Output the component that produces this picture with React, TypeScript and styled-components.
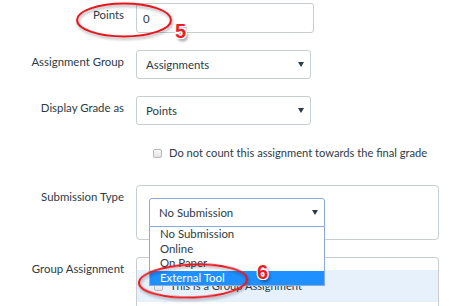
import { createGlobalStyle, styled } from "styled-components"

const GlobalStyle = createGlobalStyle`
  body {
    margin: 0;
    background: #fff;
    font-family: Lato, "Open Sans", sans-serif;
    color: #2d3b45;
  }
`

const Form = styled.div`
  position: relative;
  width: 469px;
  height: 306px;
  overflow: hidden;
  padding-top: 3px;
  box-sizing: border-box;
`

const Row = styled.div<{ $gap: number }>`
  display: grid;
  grid-template-columns: 124px 1fr;
  column-gap: 12px;
  margin-bottom: ${p => p.$gap}px;
`

const Label = styled.div`
  text-align: right;
  font-size: 11.4px;
  line-height: 14px;
  padding-top: 5px;
`

const TextInput = styled.div`
  width: 178px;
  height: 30px;
  box-sizing: border-box;
  border: 1px solid #c7cdd1;
  border-radius: 3px;
  padding: 0 6px;
  display: flex;
  align-items: center;
  font-size: 11.4px;
`

const Select = styled.div<{ $w: number; $focus?: boolean }>`
  position: relative;
  width: ${p => p.$w}px;
  height: 29px;
  box-sizing: border-box;
  border: 1px solid ${p => (p.$focus ? "#8aa9dc" : "#c7cdd1")};
  border-radius: ${p => (p.$focus ? "3px 3px 0 0" : "3px")};
  padding: 0 9px;
  display: flex;
  align-items: center;
  justify-content: space-between;
  font-size: 11.4px;
  background: #fff;
`

const Arrow = styled.span`
  width: 0;
  height: 0;
  border-left: 3px solid transparent;
  border-right: 3px solid transparent;
  border-top: 5px solid #2d3b45;
  margin-right: -3px;
`

const CheckRow = styled.label`
  display: flex;
  align-items: center;
  gap: 7px;
  padding-left: 17px;
  font-size: 11.15px;
  line-height: 16px;
`

const Box = styled.span`
  width: 9px;
  height: 9px;
  box-sizing: border-box;
  border: 1px solid #b5b9bd;
  border-radius: 2px;
  background: linear-gradient(#fafafa, #e3e3e3);
`

const Panel = styled.div<{ $open?: boolean }>`
  position: relative;
  width: 303px;
  box-sizing: border-box;
  border: 1px solid #c7cdd1;
  border-radius: ${p => (p.$open ? "4px 4px 0 0" : "4px")};
  padding: ${p => (p.$open ? "12px 0 0" : "12px")};
  ${p => (p.$open ? "border-bottom: none; height: 60px;" : "")}
`

const Band = styled.div`
  background: #e6f1fc;
  height: 32px;
  display: flex;
  align-items: flex-end;
  padding-bottom: 8px;
  box-sizing: border-box;
`

const List = styled.div`
  position: absolute;
  left: 12px;
  top: 41px;
  width: 176px;
  box-sizing: border-box;
  border: 1px solid #8aa9dc;
  border-top: none;
  background: #fff;
  z-index: 2;
`

const Option = styled.div<{ $active?: boolean }>`
  height: 14.5px;
  line-height: 14px;
  padding-left: 10px;
  font-size: 11.4px;
  color: ${p => (p.$active ? "#fff" : "#2d3b45")};
  background: ${p => (p.$active ? "#1e90ff" : "transparent")};
`

const Mark = styled.svg`
  position: absolute;
  left: 0;
  top: 0;
  pointer-events: none;
  z-index: 3;
`

const Step = styled.span<{ $x: number; $y: number }>`
  position: absolute;
  left: ${p => p.$x}px;
  top: ${p => p.$y}px;
  font-family: "Liberation Sans", Arial, sans-serif;
  font-weight: bold;
  font-size: 20px;
  line-height: 20px;
  color: #ee1c24;
  text-shadow:
    1px 0 0 #fff, -1px 0 0 #fff, 0 1px 0 #fff, 0 -1px 0 #fff,
    1px 1px 0 #fff, -1px -1px 0 #fff, 1px -1px 0 #fff, -1px 1px 0 #fff,
    2px 3px 3px rgba(0, 0, 0, 0.45);
  z-index: 4;
`

export default function App() {
  return (
    <Form>
      <GlobalStyle />
      <Row $gap={17}>
        <Label>Points</Label>
        <TextInput>0</TextInput>
      </Row>
      <Row $gap={17}>
        <Label>Assignment Group</Label>
        <Select $w={175}>Assignments<Arrow /></Select>
      </Row>
      <Row $gap={20}>
        <Label>Display Grade as</Label>
        <Select $w={175}>Points<Arrow /></Select>
      </Row>
      <Row $gap={24}>
        <div />
        <CheckRow><Box />Do not count this assignment towards the final grade</CheckRow>
      </Row>
      <Row $gap={17}>
        <Label>Submission Type</Label>
        <Panel>
          <Select $w={176} $focus>No Submission<Arrow /></Select>
          <List>
            <Option>No Submission</Option>
            <Option>Online</Option>
            <Option>On Paper</Option>
            <Option $active>External Tool</Option>
          </List>
        </Panel>
      </Row>
      <Row $gap={0}>
        <Label>Group Assignment</Label>
        <Panel $open>
          <Band>
            <CheckRow><Box />This is a Group Assignment</CheckRow>
          </Band>
        </Panel>
      </Row>
      <Mark width="469" height="306">
        <defs>
          <filter id="sh" x="-20%" y="-40%" width="140%" height="180%">
            <feDropShadow dx="1" dy="2" stdDeviation="1.5" floodColor="#000" floodOpacity="0.35" />
          </filter>
        </defs>
        <ellipse cx="124" cy="20" rx="47" ry="16.5" fill="none" stroke="#e8141c" strokeWidth="2" filter="url(#sh)" />
        <ellipse cx="193" cy="281" rx="54" ry="16.5" fill="none" stroke="#e8141c" strokeWidth="2" filter="url(#sh)" transform="rotate(-2 193 281)" />
      </Mark>
      <Step $x={175} $y={21}>5</Step>
      <Step $x={257} $y={262}>6</Step>
    </Form>
  )
}
